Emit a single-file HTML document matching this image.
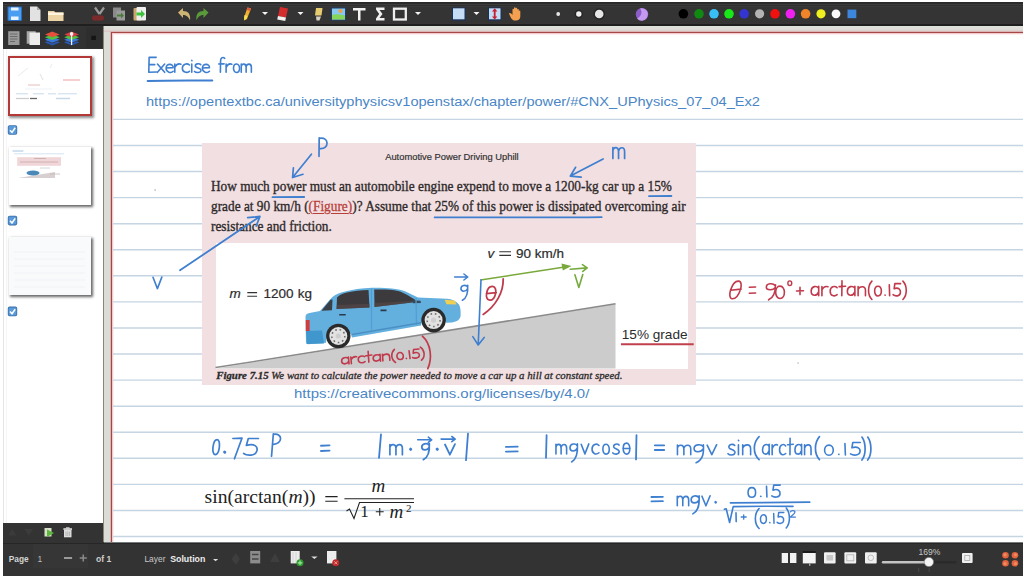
<!DOCTYPE html>
<html><head><meta charset="utf-8">
<style>
*{margin:0;padding:0;box-sizing:border-box}
html,body{width:1024px;height:576px;overflow:hidden;background:#fff;font-family:"Liberation Sans",sans-serif}
.a{position:absolute}
.fl{font-size:13.5px;line-height:16px;color:#2c2c2c;white-space:nowrap;-webkit-text-stroke:0.2px #2c2c2c}
.st{position:absolute}
.mf{font-family:"Liberation Serif",serif;color:#222;white-space:nowrap}

</style></head><body>
<div class="a" style="left:3px;top:2px;width:1020px;height:24px;background:#343434;border-bottom:1px solid #1e1e1e"></div>
<div class="a" style="left:3px;top:26px;width:100px;height:23px;background:#323232"></div>
<div class="a" style="left:3px;top:49px;width:1px;height:474px;background:#e6e6e6"></div>
<div class="a" style="left:6px;top:49px;width:1px;height:474px;background:#f5f5f5"></div>
<div class="a" style="left:3px;top:523px;width:100px;height:19px;background:#333"></div>
<div class="a" style="left:103px;top:26px;width:1px;height:516px;background:#86867a"></div>
<div class="a" style="left:104px;top:26px;width:919px;height:516px;background:#dcdcd6"></div>
<div class="a" style="left:104px;top:26px;width:919px;height:6px;background:linear-gradient(#dfe1db,#dfdcd8 55%,#dcc4c4)"></div>
<div class="a" style="left:110px;top:31px;width:913px;height:511px;background:#d8b4b4"></div>
<div class="a" style="left:111px;top:32px;width:912px;height:510px;background:#fff;border-left:1px solid #a64646;border-top:1px solid #a64646"></div>
<div class="a" style="left:112px;top:33px;width:911px;height:1px;background:#f2cccc"></div>
<div class="a" style="left:112px;top:33px;width:1px;height:509px;background:#f2cccc"></div>
<div class="a" style="left:113px;top:34px;width:910px;height:1px;background:#fcefef"></div>
<div class="a" style="left:113px;top:34px;width:1px;height:508px;background:#fcefef"></div>
<div class="a" style="left:3px;top:542px;width:1020px;height:34px;background:#333"></div><div class="a" style="left:104px;top:542px;width:919px;height:1px;background:#777a7a"></div><div class="a" style="left:3px;top:543px;width:1020px;height:1px;background:#262626"></div>
<svg class="a" style="left:0;top:0" width="1024" height="576">
<g stroke="#c6d5e3" stroke-width="1.4"><line x1="113" x2="1023" y1="119.4" y2="119.4"/><line x1="113" x2="1023" y1="145.5" y2="145.5"/><line x1="113" x2="1023" y1="171.5" y2="171.5"/><line x1="113" x2="1023" y1="197.6" y2="197.6"/><line x1="113" x2="1023" y1="223.7" y2="223.7"/><line x1="113" x2="1023" y1="249.8" y2="249.8"/><line x1="113" x2="1023" y1="275.8" y2="275.8"/><line x1="113" x2="1023" y1="301.9" y2="301.9"/><line x1="113" x2="1023" y1="328.0" y2="328.0"/><line x1="113" x2="1023" y1="354.0" y2="354.0"/><line x1="113" x2="1023" y1="380.1" y2="380.1"/><line x1="113" x2="1023" y1="406.2" y2="406.2"/><line x1="113" x2="1023" y1="432.2" y2="432.2"/><line x1="113" x2="1023" y1="458.3" y2="458.3"/><line x1="113" x2="1023" y1="484.4" y2="484.4"/><line x1="113" x2="1023" y1="510.5" y2="510.5"/><line x1="113" x2="1023" y1="536.5" y2="536.5"/></g>
</svg>
<svg class="a" style="left:0;top:0" width="1024" height="28">
<rect x="3" y="2" width="1020" height="2" fill="#2a2a2a"/><rect x="3" y="4" width="1020" height="1" fill="#3d3d3d"/><rect x="3" y="5" width="1020" height="1" fill="#2f2f2f"/><rect x="3" y="6" width="1020" height="1" fill="#3a3a3a"/>
<rect x="3" y="23" width="1020" height="1" fill="#383434"/><rect x="3" y="24" width="1020" height="2" fill="#1f1f1f"/>
<!-- save -->
<rect x="7.5" y="6.5" width="14.5" height="14.5" rx="1" fill="#2a6cc0"/>
<rect x="8.5" y="7.5" width="12.5" height="12.5" fill="#4a9ef0"/>
<rect x="11" y="7.5" width="7.5" height="3" fill="#e8f4ff"/>
<rect x="11" y="16.5" width="7.5" height="3.5" fill="#e8f4ff"/>
<!-- new -->
<path d="M30 6.5H37L40.5 10V21H30Z" fill="#e2e2e2"/>
<path d="M37 6.5V10H40.5Z" fill="#a8a8a8"/>
<!-- folder -->
<path d="M48 11H54L55.5 12.5H63.5V21H48Z" fill="#ecd4a6"/>
<rect x="48" y="12.5" width="15.5" height="2.5" fill="#fff4de"/>
<!-- cut (dim) -->
<path d="M95 7.5L99.5 14M104 7.5L99.5 14" stroke="#9a9a9a" stroke-width="2.2" fill="none"/>
<rect x="92" y="15.5" width="12" height="5" rx="2" fill="#7a2a2a"/>
<!-- copy dim -->
<rect x="113" y="7.5" width="8" height="10" fill="#8a8a8a"/>
<rect x="116.5" y="10.5" width="8.5" height="10" fill="#9a9a9a"/>
<path d="M117 14.5h4v-2l3 3-3 3v-2h-4z" fill="#4c7c3c"/>
<!-- paste -->
<rect x="133.5" y="8" width="8" height="12.5" rx="1" fill="#c8a870"/>
<rect x="136.5" y="7" width="9.5" height="13.5" rx="1" fill="#eeeeee"/>
<path d="M136.5 12.5h4.5v-2.5l4 4-4 4v-2.5h-4.5z" fill="#3cc43c"/>
<!-- undo -->
<path d="M178 12.5L183 8V11C188 11 191 14 190 20.5C188.5 16.5 186 15 183 15V18Z" fill="#cdb472"/>
<!-- redo -->
<path d="M208.5 12.5L203.5 8V11C198.5 11 195.5 14 196.5 20.5C198 16.5 200.5 15 203.5 15V18Z" fill="#5a9a3a"/>
<!-- pen -->
<path d="M247.5 7.5L251 8.5L247 19L244 20.5L244 17.5Z" fill="#f0b030"/>
<path d="M247.5 7.5L251 8.5L250 11L246.5 10Z" fill="#e05a3a"/>
<path d="M244.5 15L247.5 16L246.5 19L244 20Z" fill="#f4e050"/>
<path d="M262 12H268L265 15Z" fill="#f4f4f4"/>
<!-- eraser -->
<path d="M280 7L288 8.5L286 17.5L278 16Z" fill="#d42c2c"/>
<path d="M278 16L286 17.5L285.2 21L277.2 19.5Z" fill="#f4f0f0"/>
<path d="M297.5 12H303.5L300.5 15Z" fill="#f4f4f4"/>
<!-- highlighter -->
<path d="M316 8H322.5L321.5 15.5H315Z" fill="#e8cc70"/>
<path d="M316 16.5H321L319.5 20.5H316.5Z" fill="#d8d0c0"/>
<!-- image -->
<rect x="331" y="7.5" width="15" height="13" fill="#1f3f6f"/>
<rect x="332" y="8.5" width="13" height="11" fill="#86c8f0"/>
<path d="M332 15C336 13.5 340 14.5 345 15.5V19.5H332Z" fill="#86d45a"/>
<circle cx="340.5" cy="11" r="2" fill="#f0a040"/>
<!-- T -->
<path d="M353 8H365.5V10.5H360.5V20.5H358V10.5H353Z" fill="#f2f2f2"/>
<!-- sigma -->
<path d="M376 7.5H384.5V10H379.5L382.5 14L379.5 18H384.5V20.5H376V18.5L379.2 14L376 9.5Z" fill="#f0f0f0"/>
<!-- rect -->
<rect x="394" y="8.7" width="11.8" height="10.8" fill="none" stroke="#eeeeee" stroke-width="2.3"/>
<path d="M415 12H421L418 15Z" fill="#f4f4f4"/>
<!-- select rect -->
<rect x="452" y="7.5" width="13.5" height="13" fill="#18305a"/>
<rect x="453" y="8.3" width="11.5" height="11" fill="#c4dcf4"/>
<path d="M473.5 12H479.5L476.5 15Z" fill="#f4f4f4"/>
<!-- vertical space -->
<rect x="488" y="7.5" width="13.5" height="13" fill="#18305a"/>
<rect x="489" y="8.3" width="11.5" height="11" fill="#c4dcf4"/>
<path d="M494.7 8.3L492 11.5H493.8V16.5H492L494.7 19.5L497.4 16.5H495.6V11.5H497.4Z" fill="#c82030"/>
<!-- hand -->
<path d="M509 13.5C510 12.5 511.5 13.5 512.5 15V9.5C512.5 8.5 514 8.5 514 9.5V8C514 7 515.6 7 515.6 8V8.5C515.6 7.5 517.2 7.5 517.2 8.5V9.5C517.2 8.7 518.8 8.7 518.8 9.5V11C518.8 10.3 520.3 10.3 520.3 11V16.5C520.3 19 518.5 20.5 516 20.5H514.5C512.5 20.5 511 18.5 509 13.5Z" fill="#f4a050"/>
<!-- sizes -->
<circle cx="558.2" cy="14" r="1.9" fill="#e8e8e8"/>
<circle cx="578.8" cy="14" r="4.2" fill="#262626"/>
<circle cx="578.8" cy="14" r="2.7" fill="#f0f0f0"/>
<circle cx="599.2" cy="14" r="5.8" fill="#242424"/>
<circle cx="599.2" cy="14" r="4.3" fill="#e6e6e6"/>
<!-- fill -->
<circle cx="642" cy="14.2" r="6.2" fill="#8c5cc8"/>
<path d="M640 8.5A6 6 0 0 1 647.5 16A6 6 0 0 1 637 18.5C641 17 643 12 640 8.5Z" fill="#c49af0"/>
<!-- colors -->
<circle cx="683.4" cy="13.8" r="4.8" fill="#000"/>
<circle cx="699" cy="13.8" r="4.8" fill="#108a10"/>
<circle cx="714" cy="13.8" r="4.8" fill="#38c0f4"/>
<circle cx="729" cy="13.8" r="4.8" fill="#18e818"/>
<circle cx="744.2" cy="13.8" r="4.8" fill="#3434d0"/>
<circle cx="759.6" cy="13.8" r="4.6" fill="#b4b4b4"/>
<circle cx="775" cy="13.8" r="4.8" fill="#f01010"/>
<circle cx="790.4" cy="13.8" r="4.8" fill="#f020f0"/>
<circle cx="805.6" cy="13.8" r="4.8" fill="#f08428"/>
<circle cx="821" cy="13.8" r="4.6" fill="#f0f020"/>
<circle cx="836" cy="13.8" r="4.4" fill="#fafafa"/>
<rect x="847.5" y="9.6" width="8.8" height="8.6" fill="#3c86dc"/>
</svg>

<svg class="a" style="left:0;top:24" width="104" height="300">
<!-- sidebar toolbar icons (y offset 24) -->
<g transform="translate(0,-24)">
<rect x="8.2" y="31.2" width="11.3" height="13.8" fill="#9c9c9c"/>
<path d="M10 34h7.5M10 36.5h7.5M10 39h7.5M10 41.5h5" stroke="#6a6a6a" stroke-width="1"/>
<rect x="26.7" y="31.2" width="9" height="12.5" fill="#a8a8a8"/>
<rect x="29.5" y="32.5" width="10.5" height="12.5" fill="#ececec"/>
<g transform="translate(0,1.6)">
<path d="M52.3 44L44.8 40.8L47 39.6L52.3 41.8L57.6 39.6L59.8 40.8Z" fill="#2a58b0"/>
<path d="M52.3 41.2L44.8 38.2L52.3 35.2L59.8 38.2Z" fill="#3a78e0"/>
<path d="M52.3 38.4L44.8 35.6L52.3 32.6L59.8 35.6Z" fill="#52c040"/>
<path d="M52.3 35.6L45 32.8L52.3 29.8L59.6 32.8Z" fill="#e8503c"/>
</g>
<g transform="translate(19.3,1.6)">
<path d="M52.3 44L44.8 40.8L47 39.6L52.3 41.8L57.6 39.6L59.8 40.8Z" fill="#2a58b0"/>
<path d="M52.3 41.2L44.8 38.2L52.3 35.2L59.8 38.2Z" fill="#3a78e0"/>
<path d="M52.3 38.4L44.8 35.6L52.3 32.6L59.8 35.6Z" fill="#52c040"/>
<path d="M52.3 35.6L45 32.8L52.3 29.8L59.6 32.8Z" fill="#d84040"/>
<path d="M52.3 32V43.5" stroke="#f4f4f4" stroke-width="1.2"/>
<circle cx="52.3" cy="32.3" r="1.8" fill="#f4f4f4"/>
</g>
<rect x="86" y="27" width="16" height="21" fill="#2e2e2e"/>
<rect x="91.3" y="35.8" width="4.6" height="4.2" fill="#151515"/>
</g>
</svg>
<!-- thumbnails -->
<div class="a" style="left:8.6px;top:147px;width:82px;height:57.8px;background:#fff;box-shadow:1.5px 1.5px 2.5px 0.5px rgba(0,0,0,.6)"></div>
<div class="a" style="left:8.6px;top:237px;width:82px;height:57.8px;background:#f9fafc;box-shadow:1.5px 1.5px 2.5px 0.5px rgba(0,0,0,.6)"></div>
<div class="a" style="left:7.8px;top:55.5px;width:84.4px;height:60px;background:#fff;border:2px solid #b53838;box-shadow:1.5px 1.5px 2.5px 0.5px rgba(0,0,0,.45)"></div>
<svg class="a" style="left:0;top:0" width="104" height="330">
<g stroke-width="1" fill="none" opacity=".75">
<path d="M18 76L28 68M50 68L52 64" stroke="#dde8f2"/>
<path d="M40 74L43 80" stroke="#cfd8e4"/>
<path d="M63 80H80" stroke="#eaa0a0" stroke-width="1.3"/>
<path d="M28 85H40" stroke="#e0a8a8"/>
<path d="M25 89H52" stroke="#e8eef4"/>
<path d="M16 93.8H28M33 93.8H44M48 93.8H56M58 93.8H77" stroke="#b8cfe6" stroke-width="1"/>
<path d="M16 98.5H29" stroke="#bbbbbb" stroke-width="1.2"/>
<path d="M30 98.5H37" stroke="#333" stroke-width="1.3"/>
<path d="M56 98.5H70" stroke="#b8cce0" stroke-width="1.5"/>
</g>
<!-- thumb 2 -->

<path d="M12.5 151H23.4" stroke="#a6c4e4" stroke-width="1"/>
<path d="M14 153.8H64" stroke="#d6e4f2" stroke-width="1"/>
<rect x="17.2" y="157.2" width="43.8" height="8.6" fill="#f0d6d8"/>
<path d="M34 158.5H46M20 162H58" stroke="#c8a8a8" stroke-width=".8"/>
<path d="M40 168H50" stroke="#ccc" stroke-width=".8"/>
<path d="M18 178L55 172L55 178Z" fill="#d8d0d0"/>
<ellipse cx="33" cy="173" rx="6.5" ry="2.6" fill="#4a88b8"/>
<path d="M50 174H60" stroke="#c8b8b8" stroke-width=".8"/>
<!-- thumb 3 -->

<g stroke="#eef0f4" stroke-width=".8"><path d="M14 252H85M14 259H85M14 266H85M14 273H85M14 280H85M14 287H85"/></g>
<!-- checkboxes -->
<g>
<rect x="7.8" y="125.2" width="9.4" height="9.6" rx="1.8" fill="#3b6fa8"/>
<rect x="8.6" y="126" width="7.8" height="8" rx="1.3" fill="#5a9ad8"/>
<path d="M10 130.2L12 132.4L15.2 127.8" stroke="#fff" stroke-width="1.5" fill="none"/>
</g>
<g transform="translate(0,90.6)">
<rect x="7.8" y="125.2" width="9.4" height="9.6" rx="1.8" fill="#3b6fa8"/>
<rect x="8.6" y="126" width="7.8" height="8" rx="1.3" fill="#5a9ad8"/>
<path d="M10 130.2L12 132.4L15.2 127.8" stroke="#fff" stroke-width="1.5" fill="none"/>
</g>
<g transform="translate(0,181.4)">
<rect x="7.8" y="125.2" width="9.4" height="9.6" rx="1.8" fill="#3b6fa8"/>
<rect x="8.6" y="126" width="7.8" height="8" rx="1.3" fill="#5a9ad8"/>
<path d="M10 130.2L12 132.4L15.2 127.8" stroke="#fff" stroke-width="1.5" fill="none"/>
</g>
</svg>
<!-- sidebar bottom toolbar -->
<svg class="a" style="left:0;top:520" width="104" height="24">
<g transform="translate(0,-520)">
<path d="M12.3 529L8.2 535.6H16.4Z" fill="#3b3b3b"/>
<path d="M28.7 535.6L24 529H33.5Z" fill="#3b3b3b"/>
<rect x="44.5" y="528" width="7" height="8.5" fill="#d8e0c8"/>
<path d="M47 529.5L54 533L47 537Z" fill="#5cb83c"/>
<rect x="64" y="530" width="7.5" height="7.3" fill="#dedede"/>
<rect x="63.4" y="528.3" width="8.6" height="1.5" fill="#eee"/>
<rect x="66" y="527.3" width="3.5" height="1.2" fill="#ddd"/>
<path d="M66 531.5V536M67.8 531.5V536M69.6 531.5V536" stroke="#999" stroke-width=".6"/>
</g>
</svg>

<div class="a" style="left:33.4px;top:544.4px;width:55px;height:24px;background:#363636"></div>
<div class="a st" style="left:8.8px;top:553.6px;font-size:8.3px;font-weight:bold;color:#d4d4d4">Page</div>
<div class="a st" style="left:37.5px;top:553.6px;font-size:8.5px;color:#bbb">1</div>
<div class="a st" style="left:96px;top:553.6px;font-size:8.6px;font-weight:bold;color:#cfcfcf">of 1</div>
<div class="a st" style="left:144.4px;top:553.9px;font-size:8.45px;color:#c8c8c8">Layer</div>
<div class="a st" style="left:170.2px;top:553.9px;font-size:8.8px;font-weight:bold;color:#ededed">Solution</div>
<div class="a st" style="left:918.5px;top:546.5px;font-size:8.5px;color:#c8c8c8">169%</div>
<svg class="a" style="left:0;top:542" width="1024" height="34">
<g transform="translate(0,-542)">
<path d="M64 558H72.1" stroke="#bdbdbd" stroke-width="1.5"/>
<path d="M79.7 558H86.8M83.25 554.5V561.5" stroke="#8a8a8a" stroke-width="1.5"/>
<path d="M213 559H218.2L215.6 561.2Z" fill="#ddd"/>
<path d="M236 553L231.5 559L236 565L240 559Z" fill="#3e3e3e"/>
<rect x="250.2" y="551" width="10" height="12.4" fill="#8c8c8c"/>
<path d="M252 554.5H258.5M252 559H258.5" stroke="#444" stroke-width="1.4"/>
<path d="M275 553L270 562H280Z" fill="#3e3e3e"/>
<rect x="290.7" y="551" width="9" height="12.4" fill="#ececec"/>
<path d="M293 552V563M296 552V563" stroke="#c8c8c8" stroke-width=".6"/>
<circle cx="300" cy="562.8" r="3.5" fill="#2f9a2f"/>
<path d="M297.8 562.8H302.2M300 560.6V565" stroke="#9fe89f" stroke-width="1.2"/>
<path d="M311.2 556.4H317.6L314.4 559Z" fill="#ddd"/>
<rect x="327" y="551" width="9.4" height="12.4" fill="#ededed"/>
<circle cx="335.8" cy="562.8" r="3.5" fill="#c02828"/>
<path d="M334.3 561.3L337.3 564.3M337.3 561.3L334.3 564.3" stroke="#f0a0a0" stroke-width="1"/>
<!-- right side -->
<rect x="781.7" y="553" width="6.3" height="10" fill="#f2f2f2"/>
<rect x="790" y="553" width="6.4" height="10" fill="#f2f2f2"/>
<rect x="802.8" y="551" width="12.9" height="2" fill="#1a1a1a"/>
<rect x="802.8" y="553" width="12.9" height="10.4" fill="#f4f4f4"/>
<rect x="809" y="563.4" width="1.4" height="2.4" fill="#aaa"/>
<rect x="824" y="552.3" width="11.6" height="11.1" rx="1" fill="#f0f0f0"/>
<rect x="826.5" y="555" width="6.6" height="5.6" fill="#c8c8c8"/>
<rect x="844.4" y="552.3" width="11.8" height="11.1" rx="1" fill="#f0f0f0"/>
<rect x="846.8" y="554.8" width="7" height="6" fill="none" stroke="#b0b0b0" stroke-width=".8"/>
<rect x="865" y="552.3" width="11.7" height="11.1" rx="1" fill="#f0f0f0"/>
<circle cx="870.8" cy="557.8" r="2.8" fill="none" stroke="#b0b0b0" stroke-width=".8"/>
<rect x="881.8" y="561" width="45.5" height="2.4" rx="1.2" fill="#c4c4c4"/>
<rect x="933.3" y="561" width="22.9" height="2.4" fill="#2a2a2a"/>
<circle cx="928.9" cy="562" r="4.6" fill="#f4f4f4" stroke="#888" stroke-width=".6"/>
<path d="M918.7 568V572M929.2 568V572" stroke="#4a4a4a" stroke-width="1"/>
<rect x="962" y="553" width="10.6" height="9.9" rx="1" fill="#f0f0f0"/>
<rect x="964.8" y="555.5" width="5" height="5" fill="none" stroke="#aaa" stroke-width=".8"/>
<!-- fullscreen -->
<g fill="#e2643e">
<circle cx="1005.5" cy="555.3" r="3.3"/><circle cx="1015" cy="555.3" r="3.3"/>
<circle cx="1005.5" cy="563.2" r="3.3"/><circle cx="1015" cy="563.2" r="3.3"/>
</g>
<g fill="#f08a60"><circle cx="1005" cy="554.8" r="1.6"/><circle cx="1015.5" cy="554.8" r="1.6"/><circle cx="1005" cy="563.7" r="1.6"/><circle cx="1015.5" cy="563.7" r="1.6"/></g>
</g>
</svg>

<!-- pink box -->
<div class="a" style="left:202px;top:143px;width:494px;height:242px;background:#f2dfe2"></div>
<div class="a" style="left:215.5px;top:243px;width:472.8px;height:125.5px;background:#fff"></div>
<div class="a" style="left:385.2px;top:151px;font-size:9.35px;line-height:12px;color:#333;white-space:nowrap;-webkit-text-stroke:0.2px #333">Automotive Power Driving Uphill</div>
<div class="a" id="body" style="left:210.6px;top:176.85px;font-family:'Liberation Serif',serif;font-size:14.6px;line-height:19.85px;color:#2e2a2a;white-space:nowrap;transform:scaleX(0.912);transform-origin:0 0;-webkit-text-stroke:0.35px #2e2a2a">How much power must an automobile engine expend to move a 1200-kg car up a 15%<br>grade at 90 km/h (<span style="color:#b8403a;text-decoration:underline;text-decoration-thickness:1px;text-underline-offset:2px;-webkit-text-stroke:0.3px #b8403a">(Figure)</span>)? Assume that 25% of this power is dissipated overcoming air<br>resistance and friction.</div>
<!-- figure -->
<svg class="a" style="left:0;top:0" width="1024" height="576">
<path d="M215.5 368.5L615.5 304V368.5Z" fill="#cccccc"/>
<path d="M215.5 367.6L615.5 303.8" stroke="#8a8a8a" stroke-width="1.5"/>
<!-- green arrow -->
<path d="M247.3 292.6H257.1M247.3 296.3H257.1M499.3 251.8H511M499.3 255.4H511" stroke="#333" stroke-width="1.1"/>
<path d="M621 344.3L693.7 344.3" stroke="#c0404e" stroke-width="1.9"/>
<path d="M480.5 280L563 267.3" stroke="#7aa83a" stroke-width="1.6"/>
<path d="M571.5 266L561.5 263.5L562.8 270.5Z" fill="#7aa83a"/>
<!-- car -->
<g id="car">
<path d="M306 343.5L305.5 317C305.5 314.5 307 313.3 309.5 313L320 311L330 299.5C333 296 337 293.5 342 292.3C352 289.5 362 288 372 287.8C386 287.6 396 288.4 405 291.2L418 297.5L447 298.8C452 299.2 456 301 459 304.5C460.5 307 460.8 311 460.6 316C460 319.5 457.5 321.5 452 322.5L446 322.8C444 311 424 309 421 325.5L352 337.5C350 326 327 324 326 342.8L308 344.2Z" fill="#63afde"/>
<path d="M306 331L322 330.5L324 343.5L307 344Z" fill="#3f97cd"/>
<rect x="305.8" y="320" width="3.8" height="11" fill="#d23c3c"/>
<path d="M321.5 310.8L330.5 299.8L332.5 299.6L332 310.2Z" fill="#3a4048"/>
<path d="M336.5 309L337 297.6C340 294.5 343 293.3 347 292.5C354 291 361 290.2 368.5 290L369.5 307.5Z" fill="#3c3a3c"/>
<path d="M374.5 307L374.2 289.6C383 289.3 392 289.6 398 291C403 292.3 408 295 416 300.5L412 302.5Z" fill="#3c3a3c"/>
<path d="M337 305L369.5 303.8V307.5L336.5 309ZM374.5 303L412 301L412 302.5L374.5 307Z" fill="#5a4a4a" opacity=".6"/>
<path d="M411 300.3L420.5 300.8L421 303L413 303.2Z" fill="#3a4a5a"/>
<path d="M444.6 299.8L454.5 300.4L456.5 304.5L446.5 304.3Z" fill="#f0d050"/>
<path d="M371.5 288.5L371.5 329.5M416 298L416.5 325" stroke="#4f9fd4" stroke-width="1.2"/>
<path d="M352 334.5L421 322.8" stroke="#4a90c4" stroke-width="1.4"/>
<path d="M339.2 314.8h6.5M380.5 310.4h6" stroke="#2a3a4a" stroke-width="1.6"/>
<circle cx="338.3" cy="336" r="12.2" fill="#2a2a2a"/>
<circle cx="338.3" cy="336" r="9" fill="#e2e2e2"/>
<g stroke="#6a6a6a" stroke-width="1.5" stroke-dasharray="1.6 2.85"><circle cx="338.3" cy="336" r="6.5" fill="none"/></g>
<circle cx="338.3" cy="336" r="2.6" fill="#cfcfcf"/>
<circle cx="433.6" cy="320.1" r="12.3" fill="#2a2a2a"/>
<circle cx="433.6" cy="320.1" r="9" fill="#e2e2e2"/>
<g stroke="#6a6a6a" stroke-width="1.5" stroke-dasharray="1.6 2.85"><circle cx="433.6" cy="320.1" r="6.5" fill="none"/></g>
<circle cx="433.6" cy="320.1" r="2.6" fill="#cfcfcf"/>
</g>
</svg>
<div class="a fl" style="left:229.5px;top:286px"><i>m</i></div><div class="a fl" style="left:263.6px;top:286px">1200</div><div class="a fl" style="left:297.8px;top:286px">kg</div>
<div class="a fl" style="left:487.5px;top:245.5px"><i>v</i></div><div class="a fl" style="left:516px;top:245.5px">90 km/h</div>
<div class="a" style="left:621.8px;top:327px;font-size:13.6px;line-height:16px;color:#2c2c2c;white-space:nowrap">15% grade</div>
<div class="a" style="left:216.2px;top:369.3px;font-family:'Liberation Serif',serif;font-size:10.85px;line-height:13px;color:#2a2a2a;white-space:nowrap;font-style:italic;-webkit-text-stroke:0.3px #2a2a2a"><b>Figure 7.15</b> We want to calculate the power needed to move a car up a hill at constant speed.</div>
<!-- urls -->
<div class="a" id="url1" style="left:146.2px;top:93.5px;font-size:13.7px;line-height:16px;color:#4a86c6;white-space:nowrap;transform:scaleX(1.066);transform-origin:0 0">https://opentextbc.ca/universityphysicsv1openstax/chapter/power/#CNX_UPhysics_07_04_Ex2</div>
<div class="a" id="url2" style="left:294px;top:386px;font-size:13.2px;line-height:16px;color:#4a86c6;white-space:nowrap;transform:scaleX(1.135);transform-origin:0 0">https://creativecommons.org/licenses/by/4.0/</div>
<!-- typeset formula -->
<div class="a mf" style="left:204.6px;top:486.1px;font-size:19.6px;line-height:22px">sin(arctan(<i>m</i>))</div>
<div class="a mf" style="left:371.6px;top:475.6px;font-size:19px;line-height:20px;font-style:italic">m</div>
<div class="a mf" style="left:360.2px;top:501.5px;font-size:17px;line-height:20px">1</div>
<div class="a mf" style="left:389.6px;top:501.5px;font-size:19px;line-height:20px;font-style:italic">m</div>
<div class="a mf" style="left:406px;top:501.9px;font-size:11px;line-height:12px">2</div>
<svg class="a" style="left:0;top:0" width="1024" height="576">
<path d="M325.3 496.6H337.6M325.3 501.3H337.6" stroke="#222" stroke-width="1.1"/>
<path d="M344.4 498.7H414M375.8 511.8H383.7M379.75 507.9V515.7" stroke="#222" stroke-width="1.1"/>
<path d="M346.5 511L349.5 509L354 518.5L359.5 502.5H414" stroke="#222" stroke-width="1.1" fill="none"/>
</svg>
<svg class="a" style="left:0;top:0" width="1024" height="576"><g fill="none" stroke="#3f7fd0" stroke-width="1.6" stroke-linecap="round" stroke-linejoin="round" vector-effect="non-scaling-stroke"><path vector-effect="non-scaling-stroke" transform="translate(148.60,72.30) matrix(1.805,0,-0.000,1.660,0,0)" d="M4.2,-9 L0.3,-9 L0.1,0 L4.3,-0.2 M0.2,-4.6 L3.4,-4.6"/><path vector-effect="non-scaling-stroke" transform="translate(157.45,72.30) matrix(1.805,0,-0.000,1.660,0,0)" d="M0,-5 L4,0 M4,-5 L0,0"/><path vector-effect="non-scaling-stroke" transform="translate(165.93,72.30) matrix(1.805,0,-0.000,1.660,0,0)" d="M0.3,-2.6 L4,-2.8 C4.2,-5.2 0.2,-5.8 0.1,-2.5 C0,0.2 3,0.6 4,-0.6"/><path vector-effect="non-scaling-stroke" transform="translate(174.42,72.30) matrix(1.805,0,-0.000,1.660,0,0)" d="M0.2,-5 L0.2,0 M0.2,-3 C1,-4.8 2.4,-5.3 3.6,-4.9"/><path vector-effect="non-scaling-stroke" transform="translate(182.18,72.30) matrix(1.805,0,-0.000,1.660,0,0)" d="M4,-4.4 C2.8,-5.6 0.1,-5.2 0.1,-2.5 C0.1,0.2 2.6,0.5 4,-0.6"/><path vector-effect="non-scaling-stroke" transform="translate(190.66,72.30) matrix(1.805,0,-0.000,1.660,0,0)" d="M0.6,-5 L0.6,0 M0.6,-7.2 L0.7,-7"/><path vector-effect="non-scaling-stroke" transform="translate(194.45,72.30) matrix(1.805,0,-0.000,1.660,0,0)" d="M3.5,-4.6 C2.6,-5.6 0.2,-5.2 0.5,-3.6 C0.8,-2.4 3.8,-2.6 3.6,-1 C3.3,0.6 0.6,0.2 0,-0.5"/><path vector-effect="non-scaling-stroke" transform="translate(202.22,72.30) matrix(1.805,0,-0.000,1.660,0,0)" d="M0.3,-2.6 L4,-2.8 C4.2,-5.2 0.2,-5.8 0.1,-2.5 C0,0.2 3,0.6 4,-0.6"/></g><g fill="none" stroke="#3f7fd0" stroke-width="1.6" stroke-linecap="round" stroke-linejoin="round" vector-effect="non-scaling-stroke"><path vector-effect="non-scaling-stroke" transform="translate(218.70,72.30) matrix(1.684,0,-0.000,1.660,0,0)" d="M3.6,-8.4 C2.2,-9.6 1.1,-8.4 1.1,-6.6 L1,0 M0,-5 L3.2,-5.1"/><path vector-effect="non-scaling-stroke" transform="translate(225.77,72.30) matrix(1.684,0,-0.000,1.660,0,0)" d="M0.2,-5 L0.2,0 M0.2,-3 C1,-4.8 2.4,-5.3 3.6,-4.9"/><path vector-effect="non-scaling-stroke" transform="translate(232.84,72.30) matrix(1.684,0,-0.000,1.660,0,0)" d="M2.2,-5 C-0.2,-5 -0.2,0.1 2.2,0.1 C4.6,0.1 4.6,-5 2.2,-5Z"/><path vector-effect="non-scaling-stroke" transform="translate(240.92,72.30) matrix(1.684,0,-0.000,1.660,0,0)" d="M0.2,-5 L0.2,0 M0.2,-3.6 C0.6,-5.4 3.1,-5.6 3.1,-3 L3.1,0 M3.1,-3.4 C3.6,-5.4 6.2,-5.6 6.2,-3 L6.2,0"/></g><path d="M147.6,81 C170,80.2 195,80.6 212.4,80.5" fill="none" stroke="#3f7fd0" stroke-width="1.8" stroke-linecap="round" stroke-linejoin="round"/><path d="M319.2,137.8 L319,156.3 M319.2,138.4 C329.5,136 329.5,149.5 320,148.6" fill="none" stroke="#3f7fd0" stroke-width="1.7" stroke-linecap="round" stroke-linejoin="round"/><path d="M311.4,154.2 L292.6,177.5 M293.4,167.8 L292.6,177.5 L303,174.3" fill="none" stroke="#3f7fd0" stroke-width="1.7" stroke-linecap="round" stroke-linejoin="round"/><path d="M272.5,197.2 L304.2,197" fill="none" stroke="#3f7fd0" stroke-width="1.8" stroke-linecap="round" stroke-linejoin="round"/><g fill="none" stroke="#3f7fd0" stroke-width="1.7" stroke-linecap="round" stroke-linejoin="round" vector-effect="non-scaling-stroke"><path vector-effect="non-scaling-stroke" transform="translate(612.50,158.40) matrix(1.953,0,-0.000,2.160,0,0)" d="M0.2,-5 L0.2,0 M0.2,-3.6 C0.6,-5.4 3.1,-5.6 3.1,-3 L3.1,0 M3.1,-3.4 C3.6,-5.4 6.2,-5.6 6.2,-3 L6.2,0"/></g><path d="M603.1,159 L570.3,176.1 M575.6,167.3 L570.3,176.1 L581.2,177.2" fill="none" stroke="#3f7fd0" stroke-width="1.7" stroke-linecap="round" stroke-linejoin="round"/><path d="M649,196.2 L671.4,196" fill="none" stroke="#3f7fd0" stroke-width="1.8" stroke-linecap="round" stroke-linejoin="round"/><path d="M434.6,217.4 C480,217 560,217.8 601.7,217.2" fill="none" stroke="#3f7fd0" stroke-width="1.8" stroke-linecap="round" stroke-linejoin="round"/><g fill="none" stroke="#3f7fd0" stroke-width="1.6" stroke-linecap="round" stroke-linejoin="round" vector-effect="non-scaling-stroke"><path vector-effect="non-scaling-stroke" transform="translate(153.00,288.60) matrix(1.840,0,-0.000,2.055,0,0)" d="M0,-5.5 L2.4,0 L4.8,-5.6"/></g><path d="M180,270.3 L259.9,216.5 M247.7,217.6 L259.9,216.5 L256.2,226" fill="none" stroke="#3f7fd0" stroke-width="1.8" stroke-linecap="round" stroke-linejoin="round"/><path d="M454.6,277 L467.8,277 M463.90000000000003,274 L467.8,277 L463.90000000000003,280" fill="none" stroke="#3f7fd0" stroke-width="1.5" stroke-linecap="round" stroke-linejoin="round"/><g fill="none" stroke="#3f7fd0" stroke-width="1.6" stroke-linecap="round" stroke-linejoin="round" vector-effect="non-scaling-stroke"><path vector-effect="non-scaling-stroke" transform="translate(460.80,293.60) matrix(1.604,0,-0.000,1.590,0,0)" d="M4.2,-4.2 C3.2,-5.8 0.1,-5.4 0.1,-3.2 C0.1,-1 3.2,-1 4.2,-3 M4.3,-5.2 C4.5,-1.5 4.4,2.5 1,4.2"/></g><g fill="none" stroke="#c03a4c" stroke-width="1.7" stroke-linecap="round" stroke-linejoin="round" vector-effect="non-scaling-stroke"><path vector-effect="non-scaling-stroke" transform="translate(485.80,299.90) matrix(2.090,0,-0.000,1.580,0,0)" d="M3.2,-8.6 C0.2,-8.8 -0.8,0 1.8,0.2 C4.8,0.4 6,-8.4 3.2,-8.6Z M0.3,-4 L5,-4.6"/></g><path d="M503.2,279 C503.5,292 496,306 483.2,314.4" fill="none" stroke="#c03a4c" stroke-width="1.8" stroke-linecap="round" stroke-linejoin="round"/><path d="M481,279.7 L478.2,345 M472.8,336.6 L478.2,345 L484.2,337.4" fill="none" stroke="#3f7fd0" stroke-width="1.6" stroke-linecap="round" stroke-linejoin="round"/><path d="M570.2,269.3 L587.2,267.9 M582.4,264.6 L587.2,267.9 L582.8,271.4" fill="none" stroke="#76aa3e" stroke-width="1.6" stroke-linecap="round" stroke-linejoin="round"/><g fill="none" stroke="#76aa3e" stroke-width="1.6" stroke-linecap="round" stroke-linejoin="round" vector-effect="non-scaling-stroke"><path vector-effect="non-scaling-stroke" transform="translate(574.90,287.50) matrix(1.640,0,-0.000,2.304,0,0)" d="M0,-5.5 L2.4,0 L4.8,-5.6"/></g><g transform="rotate(-5 342 364)"><g fill="none" stroke="#c03a4c" stroke-width="1.6" stroke-linecap="round" stroke-linejoin="round" vector-effect="non-scaling-stroke"><path vector-effect="non-scaling-stroke" transform="translate(341.70,364.50) matrix(1.702,0,-0.000,1.320,0,0)" d="M4.2,-4.2 C3.2,-5.6 0.2,-5.4 0.1,-2.6 C0,0.3 3.2,0.4 4.2,-2 M4.3,-5.2 L4.3,0"/><path vector-effect="non-scaling-stroke" transform="translate(351.06,364.50) matrix(1.702,0,-0.000,1.320,0,0)" d="M0.2,-5 L0.2,0 M0.2,-3 C1,-4.8 2.4,-5.3 3.6,-4.9"/><path vector-effect="non-scaling-stroke" transform="translate(358.38,364.50) matrix(1.702,0,-0.000,1.320,0,0)" d="M4,-4.4 C2.8,-5.6 0.1,-5.2 0.1,-2.5 C0.1,0.2 2.6,0.5 4,-0.6"/><path vector-effect="non-scaling-stroke" transform="translate(366.38,364.50) matrix(1.702,0,-0.000,1.320,0,0)" d="M1.6,-8.2 L1.5,0 M0,-5 L3.6,-5.2"/><path vector-effect="non-scaling-stroke" transform="translate(373.35,364.50) matrix(1.702,0,-0.000,1.320,0,0)" d="M4.2,-4.2 C3.2,-5.6 0.2,-5.4 0.1,-2.6 C0,0.3 3.2,0.4 4.2,-2 M4.3,-5.2 L4.3,0"/><path vector-effect="non-scaling-stroke" transform="translate(382.71,364.50) matrix(1.702,0,-0.000,1.320,0,0)" d="M0.2,-5 L0.2,0 M0.2,-3.4 C1,-5.4 4.3,-5.6 4.3,-3 L4.3,0"/><path vector-effect="non-scaling-stroke" transform="translate(391.39,364.50) matrix(1.702,0,-0.000,1.320,0,0)" d="M2.4,-8 C0,-5.5 -0.2,-0.5 2.4,2"/><path vector-effect="non-scaling-stroke" transform="translate(396.67,364.50) matrix(1.702,0,-0.000,1.320,0,0)" d="M2.3,-5.2 C-0.2,-5.2 -0.2,0.1 2.3,0.1 C4.8,0.1 4.8,-5.2 2.3,-5.2Z"/><path vector-effect="non-scaling-stroke" transform="translate(405.35,364.50) matrix(1.702,0,-0.000,1.320,0,0)" d="M0.7,-0.4 L0.8,-0.3"/><path vector-effect="non-scaling-stroke" transform="translate(408.92,364.50) matrix(1.702,0,-0.000,1.320,0,0)" d="M0.6,-6 L0.8,0"/><path vector-effect="non-scaling-stroke" transform="translate(412.84,364.50) matrix(1.702,0,-0.000,1.320,0,0)" d="M4.2,-6.6 L1,-6.6 L0.6,-3.8 C3,-4.8 4.4,-3.4 4.1,-1.6 C3.8,0.4 1.2,0.4 0,-0.6"/><path vector-effect="non-scaling-stroke" transform="translate(421.18,364.50) matrix(1.702,0,-0.000,1.320,0,0)" d="M0.2,-8 C2.6,-5.5 2.8,-0.5 0.2,2"/></g></g><path d="M422.4,336.2 C431,344 432.5,358 427.8,368.7" fill="none" stroke="#c03a4c" stroke-width="1.7" stroke-linecap="round" stroke-linejoin="round"/><g fill="none" stroke="#c03a4c" stroke-width="1.6" stroke-linecap="round" stroke-linejoin="round" vector-effect="non-scaling-stroke"><path vector-effect="non-scaling-stroke" transform="translate(728.30,298.30) matrix(2.240,0,-0.360,2.000,0,0)" d="M3.2,-8.6 C0.2,-8.8 -0.8,0 1.8,0.2 C4.8,0.4 6,-8.4 3.2,-8.6Z M0.3,-4 L5,-4.6"/></g><path d="M749.3,287.2 L755.6,287 M749.3,293.2 L755.6,293" fill="none" stroke="#c03a4c" stroke-width="1.6" stroke-linecap="round" stroke-linejoin="round"/><g fill="none" stroke="#c03a4c" stroke-width="1.6" stroke-linecap="round" stroke-linejoin="round" vector-effect="non-scaling-stroke"><path vector-effect="non-scaling-stroke" transform="translate(765.90,296.60) matrix(2.239,0,-0.000,1.610,0,0)" d="M4.2,-6.8 C3.2,-8.6 0.2,-8.4 0.2,-5.8 C0.2,-3.8 3.4,-3.6 4.2,-5.8 M4.3,-7.4 C4.3,-3.5 3.6,0.5 1.2,2"/></g><g fill="none" stroke="#c03a4c" stroke-width="1.6" stroke-linecap="round" stroke-linejoin="round" vector-effect="non-scaling-stroke"><path vector-effect="non-scaling-stroke" transform="translate(774.70,298.20) matrix(2.326,0,-0.000,2.320,0,0)" d="M2.3,-5.2 C-0.2,-5.2 -0.2,0.1 2.3,0.1 C4.8,0.1 4.8,-5.2 2.3,-5.2Z"/></g><path d="M789.8,280.9 C787.2,280.9 787.2,285.5 789.8,285.5 C792.4,285.5 792.4,280.9 789.8,280.9Z" fill="none" stroke="#c03a4c" stroke-width="1.4" stroke-linecap="round" stroke-linejoin="round"/><path d="M796.5,291 L803.5,290.8 M800,287.4 L800,294.6" fill="none" stroke="#c03a4c" stroke-width="1.6" stroke-linecap="round" stroke-linejoin="round"/><g fill="none" stroke="#c03a4c" stroke-width="1.6" stroke-linecap="round" stroke-linejoin="round" vector-effect="non-scaling-stroke"><path vector-effect="non-scaling-stroke" transform="translate(811.00,295.80) matrix(1.791,0,-0.000,1.840,0,0)" d="M4.2,-4.2 C3.2,-5.6 0.2,-5.4 0.1,-2.6 C0,0.3 3.2,0.4 4.2,-2 M4.3,-5.2 L4.3,0"/><path vector-effect="non-scaling-stroke" transform="translate(821.57,295.80) matrix(1.791,0,-0.000,1.840,0,0)" d="M0.2,-5 L0.2,0 M0.2,-3 C1,-4.8 2.4,-5.3 3.6,-4.9"/><path vector-effect="non-scaling-stroke" transform="translate(829.99,295.80) matrix(1.791,0,-0.000,1.840,0,0)" d="M4,-4.4 C2.8,-5.6 0.1,-5.2 0.1,-2.5 C0.1,0.2 2.6,0.5 4,-0.6"/><path vector-effect="non-scaling-stroke" transform="translate(839.13,295.80) matrix(1.791,0,-0.000,1.840,0,0)" d="M1.6,-8.2 L1.5,0 M0,-5 L3.6,-5.2"/><path vector-effect="non-scaling-stroke" transform="translate(847.19,295.80) matrix(1.791,0,-0.000,1.840,0,0)" d="M4.2,-4.2 C3.2,-5.6 0.2,-5.4 0.1,-2.6 C0,0.3 3.2,0.4 4.2,-2 M4.3,-5.2 L4.3,0"/><path vector-effect="non-scaling-stroke" transform="translate(857.76,295.80) matrix(1.791,0,-0.000,1.840,0,0)" d="M0.2,-5 L0.2,0 M0.2,-3.4 C1,-5.4 4.3,-5.6 4.3,-3 L4.3,0"/><path vector-effect="non-scaling-stroke" transform="translate(867.61,295.80) matrix(1.791,0,-0.000,1.840,0,0)" d="M2.4,-8 C0,-5.5 -0.2,-0.5 2.4,2"/><path vector-effect="non-scaling-stroke" transform="translate(873.88,295.80) matrix(1.791,0,-0.000,1.840,0,0)" d="M2.3,-5.2 C-0.2,-5.2 -0.2,0.1 2.3,0.1 C4.8,0.1 4.8,-5.2 2.3,-5.2Z"/><path vector-effect="non-scaling-stroke" transform="translate(883.73,295.80) matrix(1.791,0,-0.000,1.840,0,0)" d="M0.7,-0.4 L0.8,-0.3"/><path vector-effect="non-scaling-stroke" transform="translate(888.21,295.80) matrix(1.791,0,-0.000,1.840,0,0)" d="M0.6,-6 L0.8,0"/><path vector-effect="non-scaling-stroke" transform="translate(893.05,295.80) matrix(1.791,0,-0.000,1.840,0,0)" d="M4.2,-6.6 L1,-6.6 L0.6,-3.8 C3,-4.8 4.4,-3.4 4.1,-1.6 C3.8,0.4 1.2,0.4 0,-0.6"/><path vector-effect="non-scaling-stroke" transform="translate(902.54,295.80) matrix(1.791,0,-0.000,1.840,0,0)" d="M0.2,-8 C2.6,-5.5 2.8,-0.5 0.2,2"/></g><g fill="none" stroke="#3f7fd0" stroke-width="1.7" stroke-linecap="round" stroke-linejoin="round" vector-effect="non-scaling-stroke"><path vector-effect="non-scaling-stroke" transform="translate(211.50,454.40) matrix(1.520,0,-0.222,1.850,0,0)" d="M2.5,-8 C-0.3,-8 -0.3,0.1 2.5,0.1 C5.3,0.1 5.3,-8 2.5,-8Z"/></g><path d="M224.6,452 L224.8,452.2" fill="none" stroke="#3f7fd0" stroke-width="3" stroke-linecap="round" stroke-linejoin="round"/><g fill="none" stroke="#3f7fd0" stroke-width="1.7" stroke-linecap="round" stroke-linejoin="round" vector-effect="non-scaling-stroke"><path vector-effect="non-scaling-stroke" transform="translate(231.50,456.00) matrix(1.979,0,-0.184,2.300,0,0)" d="M0,-7.6 L4.6,-7.8 L1.6,1.2"/></g><g fill="none" stroke="#3f7fd0" stroke-width="1.7" stroke-linecap="round" stroke-linejoin="round" vector-effect="non-scaling-stroke"><path vector-effect="non-scaling-stroke" transform="translate(243.50,455.00) matrix(3.159,0,-0.250,2.500,0,0)" d="M4.2,-6.6 L1,-6.6 L0.6,-3.8 C3,-4.8 4.4,-3.4 4.1,-1.6 C3.8,0.4 1.2,0.4 0,-0.6"/></g><g fill="none" stroke="#3f7fd0" stroke-width="1.7" stroke-linecap="round" stroke-linejoin="round" vector-effect="non-scaling-stroke"><path vector-effect="non-scaling-stroke" transform="translate(271.00,455.10) matrix(2.109,0,-0.188,2.350,0,0)" d="M0.3,-9 L0.3,0.5 M0.3,-8.8 C5,-9.6 5.2,-4.4 0.4,-4.6"/></g><path d="M321,445.8 L329.5,445.4 M321,451 L329.5,450.6" fill="none" stroke="#3f7fd0" stroke-width="1.9" stroke-linecap="round" stroke-linejoin="round"/><path d="M381,434.4 L379,457.8" fill="none" stroke="#3f7fd0" stroke-width="1.8" stroke-linecap="round" stroke-linejoin="round"/><g fill="none" stroke="#3f7fd0" stroke-width="1.7" stroke-linecap="round" stroke-linejoin="round" vector-effect="non-scaling-stroke"><path vector-effect="non-scaling-stroke" transform="translate(389.50,454.70) matrix(2.078,0,-0.000,2.040,0,0)" d="M0.2,-5 L0.2,0 M0.2,-3.6 C0.6,-5.4 3.1,-5.6 3.1,-3 L3.1,0 M3.1,-3.4 C3.6,-5.4 6.2,-5.6 6.2,-3 L6.2,0"/></g><path d="M410.6,449.2 L410.7,449.3" fill="none" stroke="#3f7fd0" stroke-width="3" stroke-linecap="round" stroke-linejoin="round"/><path d="M417.7,439.8 L431.7,439.8 M428.32,437.2 L431.7,439.8 L428.32,442.40000000000003" fill="none" stroke="#3f7fd0" stroke-width="1.6" stroke-linecap="round" stroke-linejoin="round"/><g fill="none" stroke="#3f7fd0" stroke-width="1.8" stroke-linecap="round" stroke-linejoin="round" vector-effect="non-scaling-stroke"><path vector-effect="non-scaling-stroke" transform="translate(421.60,452.50) matrix(1.792,0,-0.000,1.700,0,0)" d="M4.2,-4.2 C3.2,-5.8 0.1,-5.4 0.1,-3.2 C0.1,-1 3.2,-1 4.2,-3 M4.3,-5.2 C4.5,-1.5 4.4,2.5 1,4.2"/></g><path d="M437.2,449.2 L437.3,449.3" fill="none" stroke="#3f7fd0" stroke-width="3" stroke-linecap="round" stroke-linejoin="round"/><path d="M441.1,439.1 L455.2,439.1 M451.82,436.5 L455.2,439.1 L451.82,441.70000000000005" fill="none" stroke="#3f7fd0" stroke-width="1.6" stroke-linecap="round" stroke-linejoin="round"/><g fill="none" stroke="#3f7fd0" stroke-width="1.8" stroke-linecap="round" stroke-linejoin="round" vector-effect="non-scaling-stroke"><path vector-effect="non-scaling-stroke" transform="translate(445.00,454.70) matrix(2.318,0,-0.000,2.040,0,0)" d="M0,-5 L2.1,0 L4.3,-5.2"/></g><path d="M468,433.6 L466,460.2" fill="none" stroke="#3f7fd0" stroke-width="1.8" stroke-linecap="round" stroke-linejoin="round"/><path d="M505.9,446.9 L517.7,446.7 M505.9,451.6 L517.7,451.4" fill="none" stroke="#3f7fd0" stroke-width="1.8" stroke-linecap="round" stroke-linejoin="round"/><path d="M546.6,435.2 L546,457.8" fill="none" stroke="#3f7fd0" stroke-width="1.8" stroke-linecap="round" stroke-linejoin="round"/><g fill="none" stroke="#3f7fd0" stroke-width="1.6" stroke-linecap="round" stroke-linejoin="round" vector-effect="non-scaling-stroke"><path vector-effect="non-scaling-stroke" transform="translate(555.60,453.90) matrix(1.777,0,-0.000,1.920,0,0)" d="M0.2,-5 L0.2,0 M0.2,-3.6 C0.6,-5.4 3.1,-5.6 3.1,-3 L3.1,0 M3.1,-3.4 C3.6,-5.4 6.2,-5.6 6.2,-3 L6.2,0"/><path vector-effect="non-scaling-stroke" transform="translate(569.82,453.90) matrix(1.777,0,-0.000,1.920,0,0)" d="M4.2,-4.2 C3.2,-5.8 0.1,-5.4 0.1,-3.2 C0.1,-1 3.2,-1 4.2,-3 M4.3,-5.2 C4.5,-1.5 4.4,2.5 1,4.2"/><path vector-effect="non-scaling-stroke" transform="translate(581.19,453.90) matrix(1.777,0,-0.000,1.920,0,0)" d="M0,-5 L2.1,0 L4.3,-5.2"/><path vector-effect="non-scaling-stroke" transform="translate(591.86,453.90) matrix(1.777,0,-0.000,1.920,0,0)" d="M4,-4.4 C2.8,-5.6 0.1,-5.2 0.1,-2.5 C0.1,0.2 2.6,0.5 4,-0.6"/><path vector-effect="non-scaling-stroke" transform="translate(602.16,453.90) matrix(1.777,0,-0.000,1.920,0,0)" d="M2.2,-5 C-0.2,-5 -0.2,0.1 2.2,0.1 C4.6,0.1 4.6,-5 2.2,-5Z"/><path vector-effect="non-scaling-stroke" transform="translate(612.83,453.90) matrix(1.777,0,-0.000,1.920,0,0)" d="M3.5,-4.6 C2.6,-5.6 0.2,-5.2 0.5,-3.6 C0.8,-2.4 3.8,-2.6 3.6,-1 C3.3,0.6 0.6,0.2 0,-0.5"/><path vector-effect="non-scaling-stroke" transform="translate(622.42,453.90) matrix(1.777,0,-0.000,1.920,0,0)" d="M2.3,-5.6 C-0.2,-5.6 -0.2,0.1 2.3,0.1 C4.8,0.1 4.8,-5.6 2.3,-5.6Z M0.3,-2.8 L4.3,-2.8"/></g><path d="M636.5,435.2 L636,459.4" fill="none" stroke="#3f7fd0" stroke-width="1.8" stroke-linecap="round" stroke-linejoin="round"/><path d="M654.8,445.3 L664.2,445.3 M654.8,450 L664.2,450" fill="none" stroke="#3f7fd0" stroke-width="1.8" stroke-linecap="round" stroke-linejoin="round"/><g fill="none" stroke="#3f7fd0" stroke-width="1.6" stroke-linecap="round" stroke-linejoin="round" vector-effect="non-scaling-stroke"><path vector-effect="non-scaling-stroke" transform="translate(677.00,454.70) matrix(2.217,0,-0.000,1.920,0,0)" d="M0.2,-5 L0.2,0 M0.2,-3.6 C0.6,-5.4 3.1,-5.6 3.1,-3 L3.1,0 M3.1,-3.4 C3.6,-5.4 6.2,-5.6 6.2,-3 L6.2,0"/><path vector-effect="non-scaling-stroke" transform="translate(693.85,454.70) matrix(2.217,0,-0.000,1.920,0,0)" d="M4.2,-4.2 C3.2,-5.8 0.1,-5.4 0.1,-3.2 C0.1,-1 3.2,-1 4.2,-3 M4.3,-5.2 C4.5,-1.5 4.4,2.5 1,4.2"/><path vector-effect="non-scaling-stroke" transform="translate(707.15,454.70) matrix(2.217,0,-0.000,1.920,0,0)" d="M0,-5 L2.1,0 L4.3,-5.2"/></g><g fill="none" stroke="#3f7fd0" stroke-width="1.6" stroke-linecap="round" stroke-linejoin="round" vector-effect="non-scaling-stroke"><path vector-effect="non-scaling-stroke" transform="translate(728.00,454.70) matrix(1.933,0,-0.000,2.000,0,0)" d="M3.5,-4.6 C2.6,-5.6 0.2,-5.2 0.5,-3.6 C0.8,-2.4 3.8,-2.6 3.6,-1 C3.3,0.6 0.6,0.2 0,-0.5"/><path vector-effect="non-scaling-stroke" transform="translate(737.28,454.70) matrix(1.933,0,-0.000,2.000,0,0)" d="M0.6,-5 L0.6,0 M0.6,-7.2 L0.7,-7"/><path vector-effect="non-scaling-stroke" transform="translate(742.31,454.70) matrix(1.933,0,-0.000,2.000,0,0)" d="M0.2,-5 L0.2,0 M0.2,-3.4 C1,-5.4 4.3,-5.6 4.3,-3 L4.3,0"/></g><g fill="none" stroke="#3f7fd0" stroke-width="1.7" stroke-linecap="round" stroke-linejoin="round" vector-effect="non-scaling-stroke"><path vector-effect="non-scaling-stroke" transform="translate(753.00,455.00) matrix(2.538,0,-0.000,2.300,0,0)" d="M2.4,-8 C0,-5.5 -0.2,-0.5 2.4,2"/></g><g fill="none" stroke="#3f7fd0" stroke-width="1.6" stroke-linecap="round" stroke-linejoin="round" vector-effect="non-scaling-stroke"><path vector-effect="non-scaling-stroke" transform="translate(762.40,454.70) matrix(1.574,0,-0.000,2.000,0,0)" d="M4.2,-4.2 C3.2,-5.6 0.2,-5.4 0.1,-2.6 C0,0.3 3.2,0.4 4.2,-2 M4.3,-5.2 L4.3,0"/><path vector-effect="non-scaling-stroke" transform="translate(771.84,454.70) matrix(1.574,0,-0.000,2.000,0,0)" d="M0.2,-5 L0.2,0 M0.2,-3 C1,-4.8 2.4,-5.3 3.6,-4.9"/><path vector-effect="non-scaling-stroke" transform="translate(779.40,454.70) matrix(1.574,0,-0.000,2.000,0,0)" d="M4,-4.4 C2.8,-5.6 0.1,-5.2 0.1,-2.5 C0.1,0.2 2.6,0.5 4,-0.6"/><path vector-effect="non-scaling-stroke" transform="translate(787.58,454.70) matrix(1.574,0,-0.000,2.000,0,0)" d="M1.6,-8.2 L1.5,0 M0,-5 L3.6,-5.2"/><path vector-effect="non-scaling-stroke" transform="translate(794.82,454.70) matrix(1.574,0,-0.000,2.000,0,0)" d="M4.2,-4.2 C3.2,-5.6 0.2,-5.4 0.1,-2.6 C0,0.3 3.2,0.4 4.2,-2 M4.3,-5.2 L4.3,0"/><path vector-effect="non-scaling-stroke" transform="translate(804.26,454.70) matrix(1.574,0,-0.000,2.000,0,0)" d="M0.2,-5 L0.2,0 M0.2,-3.4 C1,-5.4 4.3,-5.6 4.3,-3 L4.3,0"/></g><g fill="none" stroke="#3f7fd0" stroke-width="1.7" stroke-linecap="round" stroke-linejoin="round" vector-effect="non-scaling-stroke"><path vector-effect="non-scaling-stroke" transform="translate(814.30,455.00) matrix(2.154,0,-0.000,2.300,0,0)" d="M2.4,-8 C0,-5.5 -0.2,-0.5 2.4,2"/></g><g fill="none" stroke="#3f7fd0" stroke-width="1.6" stroke-linecap="round" stroke-linejoin="round" vector-effect="non-scaling-stroke"><path vector-effect="non-scaling-stroke" transform="translate(823.60,455.00) matrix(2.319,0,-0.000,1.900,0,0)" d="M2.3,-5.2 C-0.2,-5.2 -0.2,0.1 2.3,0.1 C4.8,0.1 4.8,-5.2 2.3,-5.2Z"/><path vector-effect="non-scaling-stroke" transform="translate(837.05,455.00) matrix(2.319,0,-0.000,1.900,0,0)" d="M0.7,-0.4 L0.8,-0.3"/><path vector-effect="non-scaling-stroke" transform="translate(843.54,455.00) matrix(2.319,0,-0.000,1.900,0,0)" d="M0.6,-6 L0.8,0"/><path vector-effect="non-scaling-stroke" transform="translate(850.50,455.00) matrix(2.319,0,-0.000,1.900,0,0)" d="M4.2,-6.6 L1,-6.6 L0.6,-3.8 C3,-4.8 4.4,-3.4 4.1,-1.6 C3.8,0.4 1.2,0.4 0,-0.6"/></g><g fill="none" stroke="#3f7fd0" stroke-width="1.7" stroke-linecap="round" stroke-linejoin="round" vector-effect="non-scaling-stroke"><path vector-effect="non-scaling-stroke" transform="translate(861.60,455.50) matrix(1.700,0,-0.000,2.300,0,0)" d="M0.2,-8 C2.6,-5.5 2.8,-0.5 0.2,2"/><path vector-effect="non-scaling-stroke" transform="translate(867.38,455.50) matrix(1.700,0,-0.000,2.300,0,0)" d="M0.2,-8 C2.6,-5.5 2.8,-0.5 0.2,2"/></g><path d="M651.4,497 L662.9,496.8 M651.4,501.4 L662.9,501.2" fill="none" stroke="#3f7fd0" stroke-width="1.8" stroke-linecap="round" stroke-linejoin="round"/><g fill="none" stroke="#3f7fd0" stroke-width="1.6" stroke-linecap="round" stroke-linejoin="round" vector-effect="non-scaling-stroke"><path vector-effect="non-scaling-stroke" transform="translate(676.90,505.80) matrix(1.898,0,-0.000,1.920,0,0)" d="M0.2,-5 L0.2,0 M0.2,-3.6 C0.6,-5.4 3.1,-5.6 3.1,-3 L3.1,0 M3.1,-3.4 C3.6,-5.4 6.2,-5.6 6.2,-3 L6.2,0"/><path vector-effect="non-scaling-stroke" transform="translate(690.94,505.80) matrix(1.898,0,-0.000,1.920,0,0)" d="M4.2,-4.2 C3.2,-5.8 0.1,-5.4 0.1,-3.2 C0.1,-1 3.2,-1 4.2,-3 M4.3,-5.2 C4.5,-1.5 4.4,2.5 1,4.2"/><path vector-effect="non-scaling-stroke" transform="translate(701.95,505.80) matrix(1.898,0,-0.000,1.920,0,0)" d="M0,-5 L2.1,0 L4.3,-5.2"/></g><path d="M715.6,502.2 L715.7,502.3" fill="none" stroke="#3f7fd0" stroke-width="2.6" stroke-linecap="round" stroke-linejoin="round"/><g fill="none" stroke="#3f7fd0" stroke-width="1.6" stroke-linecap="round" stroke-linejoin="round" vector-effect="non-scaling-stroke"><path vector-effect="non-scaling-stroke" transform="translate(747.20,497.00) matrix(2.012,0,-0.000,1.800,0,0)" d="M2.3,-5.2 C-0.2,-5.2 -0.2,0.1 2.3,0.1 C4.8,0.1 4.8,-5.2 2.3,-5.2Z"/><path vector-effect="non-scaling-stroke" transform="translate(759.27,497.00) matrix(2.012,0,-0.000,1.800,0,0)" d="M0.7,-0.4 L0.8,-0.3"/><path vector-effect="non-scaling-stroke" transform="translate(765.31,497.00) matrix(2.012,0,-0.000,1.800,0,0)" d="M0.6,-6 L0.8,0"/><path vector-effect="non-scaling-stroke" transform="translate(771.75,497.00) matrix(2.012,0,-0.000,1.800,0,0)" d="M4.2,-6.6 L1,-6.6 L0.6,-3.8 C3,-4.8 4.4,-3.4 4.1,-1.6 C3.8,0.4 1.2,0.4 0,-0.6"/></g><path d="M730.5,502.8 L809.6,502.2" fill="none" stroke="#3f7fd0" stroke-width="1.8" stroke-linecap="round" stroke-linejoin="round"/><path d="M724.4,509.3 L726.2,508.8 L729.6,522.5 L733.2,506.6 C750,506.2 775,506.2 793,506.4" fill="none" stroke="#3f7fd0" stroke-width="1.6" stroke-linecap="round" stroke-linejoin="round"/><path d="M736,512.8 L736.2,521.6" fill="none" stroke="#3f7fd0" stroke-width="1.6" stroke-linecap="round" stroke-linejoin="round"/><path d="M741.2,517 L746.2,517 M743.7,514.8 L743.7,519.2" fill="none" stroke="#3f7fd0" stroke-width="1.3" stroke-linecap="round" stroke-linejoin="round"/><g fill="none" stroke="#3f7fd0" stroke-width="1.6" stroke-linecap="round" stroke-linejoin="round" vector-effect="non-scaling-stroke"><path vector-effect="non-scaling-stroke" transform="translate(754.30,524.50) matrix(2.000,0,-0.000,2.000,0,0)" d="M2.4,-8 C0,-5.5 -0.2,-0.5 2.4,2"/></g><g fill="none" stroke="#3f7fd0" stroke-width="1.5" stroke-linecap="round" stroke-linejoin="round" vector-effect="non-scaling-stroke"><path vector-effect="non-scaling-stroke" transform="translate(759.80,523.30) matrix(1.578,0,-0.000,1.640,0,0)" d="M2.3,-5.2 C-0.2,-5.2 -0.2,0.1 2.3,0.1 C4.8,0.1 4.8,-5.2 2.3,-5.2Z"/><path vector-effect="non-scaling-stroke" transform="translate(768.64,523.30) matrix(1.578,0,-0.000,1.640,0,0)" d="M0.7,-0.4 L0.8,-0.3"/><path vector-effect="non-scaling-stroke" transform="translate(772.74,523.30) matrix(1.578,0,-0.000,1.640,0,0)" d="M0.6,-6 L0.8,0"/><path vector-effect="non-scaling-stroke" transform="translate(777.16,523.30) matrix(1.578,0,-0.000,1.640,0,0)" d="M4.2,-6.6 L1,-6.6 L0.6,-3.8 C3,-4.8 4.4,-3.4 4.1,-1.6 C3.8,0.4 1.2,0.4 0,-0.6"/></g><g fill="none" stroke="#3f7fd0" stroke-width="1.6" stroke-linecap="round" stroke-linejoin="round" vector-effect="non-scaling-stroke"><path vector-effect="non-scaling-stroke" transform="translate(785.90,524.00) matrix(1.692,0,-0.000,2.000,0,0)" d="M0.2,-8 C2.6,-5.5 2.8,-0.5 0.2,2"/></g><g fill="none" stroke="#3f7fd0" stroke-width="1.3" stroke-linecap="round" stroke-linejoin="round" vector-effect="non-scaling-stroke"><path vector-effect="non-scaling-stroke" transform="translate(790.30,517.20) matrix(1.152,0,-0.000,0.850,0,0)" d="M0.1,-6.2 C0.6,-8.4 4.2,-8.4 4,-5.8 C3.8,-3.8 1,-2 0,0 L4.4,-0.2"/></g><path d="M155,190 L155.2,190.2" fill="none" stroke="#999" stroke-width="1.2" stroke-linecap="round" stroke-linejoin="round"/><path d="M798,363 L798.2,363.2" fill="none" stroke="#aaa" stroke-width="1.2" stroke-linecap="round" stroke-linejoin="round"/></svg>

</body></html>
